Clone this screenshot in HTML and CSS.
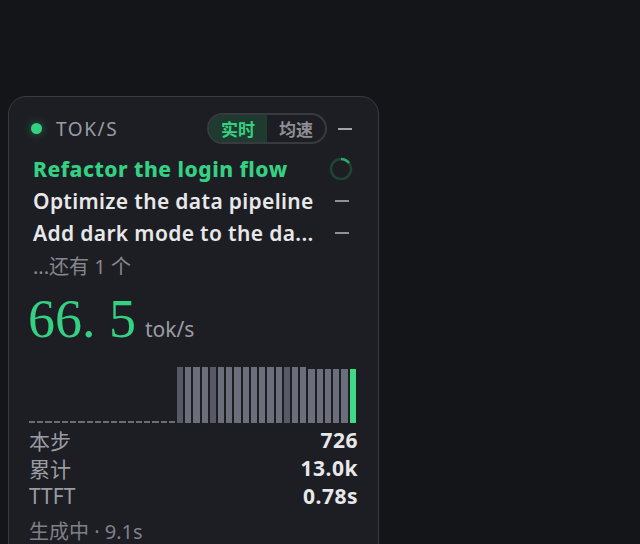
FILE: index.html
```html
<!DOCTYPE html>
<html lang="zh">
<head>
<meta charset="utf-8">
<link rel="stylesheet" href="styles.css">
</head>
<body>
<div class="panel">
  <div class="header">
    <span class="dot"></span>
    <span class="label">TOK/S</span>
    <div class="toggle">
      <span class="seg active">实时</span>
      <span class="seg">均速</span>
    </div>
    <span class="dash"></span>
  </div>
  <ul class="tasks">
    <li class="task current"><span class="name">Refactor the login flow</span>
      <svg class="spin" width="26" height="26" viewBox="0 0 26 26"><circle cx="13" cy="13" r="10" fill="none" stroke="#1d4532" stroke-width="2.5"/><path d="M13 3 A10 10 0 0 1 21 7" fill="none" stroke="#2aa86a" stroke-width="2.5"/></svg>
    </li>
    <li class="task"><span class="name">Optimize the data pipeline</span><span class="dash small"></span></li>
    <li class="task"><span class="name">Add dark mode to the da...</span><span class="dash small"></span></li>
    <li class="more">...还有 1 个</li>
  </ul>
  <div class="speed"><span class="num">66. 5</span><span class="unit">tok/s</span></div>
  <div class="chart">
    <i class="bar e"></i><i class="bar e"></i><i class="bar e"></i><i class="bar e"></i><i class="bar e"></i><i class="bar e"></i><i class="bar e"></i><i class="bar e"></i><i class="bar e"></i><i class="bar e"></i><i class="bar e"></i><i class="bar e"></i><i class="bar e"></i><i class="bar e"></i><i class="bar e"></i><i class="bar e"></i><i class="bar e"></i><i class="bar e"></i>
    <i class="bar d"></i><i class="bar f"></i><i class="bar f"></i><i class="bar f"></i><i class="bar d"></i><i class="bar f"></i><i class="bar f"></i><i class="bar f"></i><i class="bar f"></i><i class="bar f"></i><i class="bar f"></i><i class="bar f"></i><i class="bar f"></i><i class="bar d"></i><i class="bar f"></i><i class="bar f"></i><i class="bar s"></i><i class="bar s"></i><i class="bar s"></i><i class="bar s"></i><i class="bar s"></i>
    <i class="bar g"></i>
  </div>
  <dl class="stats">
    <div class="row"><dt>本步</dt><dd>726</dd></div>
    <div class="row"><dt>累计</dt><dd>13.0k</dd></div>
    <div class="row"><dt>TTFT</dt><dd>0.78s</dd></div>
  </dl>
  <div class="foot">生成中 · 9.1s</div>
</div>
</body>
</html>
```
FILE: styles.css
```css
html, body {
  margin: 0;
  padding: 0;
  background: #141519;
  height: 544px;
  overflow: hidden;
}
body {
  font-family: "Noto Sans", "Noto Sans CJK SC", sans-serif;
  color: #e4e4e7;
}
.panel {
  box-sizing: border-box;
  width: 371px;
  margin: 96px 0 0 8px;
  min-height: 470px;
  background: #1d1e23;
  border: 1px solid #3a3b41;
  border-radius: 18px;
  padding: 16px 20px 20px 20px;
  display: flex;
  flex-direction: column;
}
.header {
  display: flex;
  align-items: center;
  height: 31px;
}
.dot {
  width: 11px;
  height: 11px;
  border-radius: 50%;
  background: #35d183;
  box-shadow: 0 0 8px rgba(53, 209, 131, 0.45);
  margin-left: 2px;
}
.label {
  margin-left: 14px;
  font-size: 19px;
  color: #9b9ca4;
  letter-spacing: 1.6px;
}
.toggle {
  margin-left: auto;
  display: flex;
  height: 31px;
  box-sizing: border-box;
  border: 2px solid #393a40;
  border-radius: 16px;
  overflow: hidden;
}
.seg {
  width: 58px;
  display: flex;
  align-items: center;
  justify-content: center;
  font-size: 17px;
  font-weight: 700;
  color: #8e8f96;
  font-family: "Noto Sans CJK SC", sans-serif;
}
.seg.active {
  background: #1f3a2e;
  color: #35d183;
}
.dash {
  width: 14px;
  height: 2px;
  background: #a3a4ab;
  margin-left: 11px;
  margin-right: 6px;
}
.dash.small {
  width: 14px;
  margin: 0 9px 0 auto;
  background: #8f9097;
}
.tasks {
  list-style: none;
  margin: 9px 0 0 0;
  padding: 0 0 0 4px;
}
.task {
  height: 32px;
  display: flex;
  align-items: center;
  font-size: 21px;
  font-weight: 600;
  color: #e8e8ea;
  letter-spacing: 0.35px;
}
.task.current {
  color: #35d183;
  font-weight: 800;
  letter-spacing: 0.5px;
}
.spin {
  margin-left: auto;
  margin-right: 4px;
}
.more {
  height: 32px;
  display: flex;
  align-items: center;
  font-size: 20px;
  color: #86878e;
}
.speed {
  display: flex;
  align-items: baseline;
  margin-top: 8px;
  height: 60px;
}
.num {
  font-family: "Liberation Serif", serif;
  font-size: 54px;
  color: #35d183;
  line-height: 60px;
  margin-left: -1px;
}
.unit {
  margin-left: 9px;
  font-size: 21px;
  color: #9b9ca4;
}
.chart {
  display: flex;
  align-items: flex-end;
  gap: 2px;
  height: 56px;
  margin: 18px 2px 0 0;
}
.bar {
  flex: 1;
  display: block;
  background: #6b6f7b;
}
.bar.e { height: 2px; background: #6a6d78; }
.bar.f { height: 56px; }
.bar.d { height: 56px; background: #575a65; }
.bar.s { height: 54px; }
.bar.g { height: 54px; background: #3ddc84; }
.stats {
  margin: 3px 0 0 0;
  padding: 0;
}
.row {
  display: flex;
  justify-content: space-between;
  align-items: center;
  height: 28px;
}
dt {
  font-size: 21px;
  color: #9b9ca4;
}
dd {
  margin: 0;
  font-size: 21px;
  font-weight: 700;
  color: #e8e8ea;
  letter-spacing: 0.5px;
}
.foot {
  margin-top: 6px;
  height: 28px;
  display: flex;
  align-items: center;
  font-size: 20px;
  color: #7f8088;
}
```
